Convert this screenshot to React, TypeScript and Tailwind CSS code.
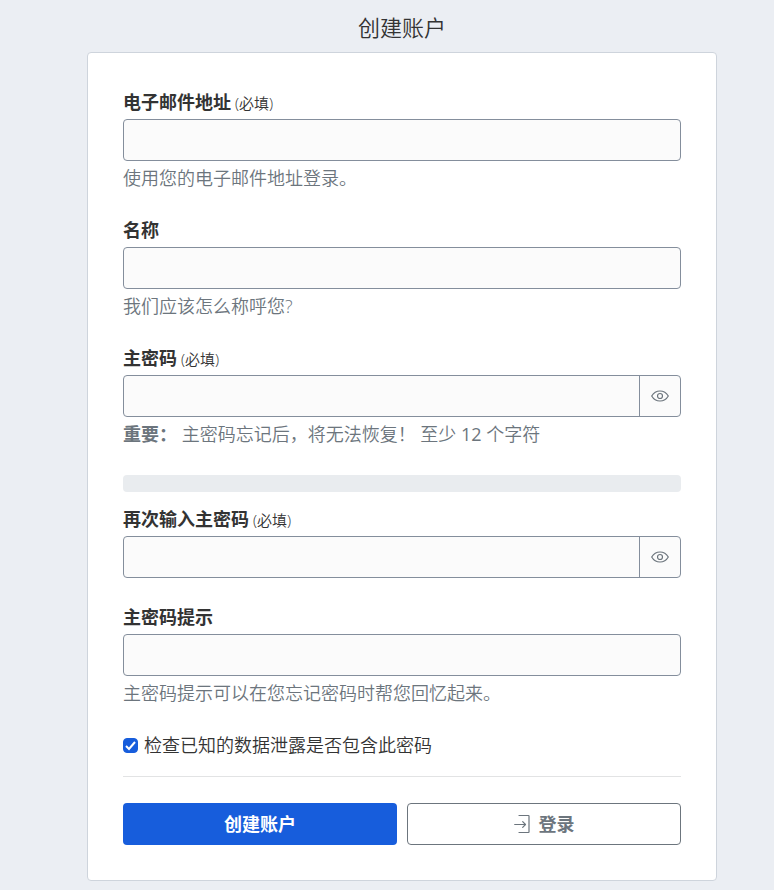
import React, { useState } from "react";

type FieldProps = {
	id: string;
	label: string;
	required?: boolean;
	type?: string;
	hint?: React.ReactNode;
};

const EyeIcon = () => (
	<svg
		width="18"
		height="12"
		viewBox="0 0 18 12"
		fill="none"
		stroke="currentColor"
		strokeWidth="1.2"
		aria-hidden="true"
	>
		<path d="M0.7 6C2.6 2.7 5.5 1 9 1s6.4 1.7 8.3 5C15.4 9.3 12.5 11 9 11S2.6 9.3 0.7 6z" />
		<circle cx="9" cy="6" r="2.5" />
	</svg>
);

const SignInIcon = () => (
	<svg
		width="16"
		height="20"
		viewBox="0 0 16 20"
		fill="none"
		stroke="currentColor"
		strokeWidth="1.2"
		strokeLinecap="round"
		strokeLinejoin="round"
		aria-hidden="true"
	>
		<path d="M5 1.5h9.5q.5 0 .5.5v16q0 .5-.5.5H5" />
		<path d="M.7 10.5h10.8M8.700 7.700l2.800 2.800-2.800 2.800" />
	</svg>
);

const Label = ({ id, label, required }: FieldProps) => (
	<label htmlFor={id} className="mb-1 block">
		<span className="font-bold">{label}</span>
		{required && <span className="text-[15px] leading-none"> (必填)</span>}
	</label>
);

const Hint = ({ children }: { children: React.ReactNode }) => (
	<p className="mt-1 text-[#6c757d]">{children}</p>
);

const TextField = (props: FieldProps) => (
	<div>
		<Label {...props} />
		<input
			id={props.id}
			type={props.type ?? "text"}
			className="block h-[42px] w-full rounded border border-[#848e9c] bg-[#fbfbfb] px-3 outline-none"
		/>
		{props.hint && <Hint>{props.hint}</Hint>}
	</div>
);

const PasswordField = (props: FieldProps) => {
	const [show, setShow] = useState(false);

	return (
		<div>
			<Label {...props} />
			<div className="flex h-[42px] overflow-hidden rounded border border-[#848e9c] bg-[#fbfbfb]">
				<input
					id={props.id}
					type={show ? "text" : "password"}
					className="min-w-0 flex-1 px-3 outline-none"
				/>
				<button
					type="button"
					aria-label="切换可见性"
					onClick={() => setShow(!show)}
					className="flex w-[41px] items-center justify-center border-l border-[#848e9c] text-[#6c757d]"
				>
					<EyeIcon />
				</button>
			</div>
			{props.hint && <Hint>{props.hint}</Hint>}
		</div>
	);
};

const App = () => {
	return (
		<main className="min-h-screen bg-[#ebeef3] pt-[14px] pr-[57px] pb-[9px] pl-[87px] font-['Open_Sans','Noto_Sans_CJK_SC',sans-serif] text-lg leading-[26px] font-[350] text-[#333333]">
			<h1 className="mb-3 text-center text-[22px] font-[350]">创建账户</h1>

			<form
				className="rounded border border-[#ced4dc] bg-white px-[35px] pt-9 pb-[35px]"
				onSubmit={(e) => e.preventDefault()}
			>
				<div className="flex flex-col gap-[26px]">
					<TextField
						id="email"
						type="email"
						label="电子邮件地址"
						required
						hint="使用您的电子邮件地址登录。"
					/>
					<TextField id="name" label="名称" hint="我们应该怎么称呼您?" />
					<PasswordField
						id="password"
						label="主密码"
						required
						hint={
							<>
								<b className="font-bold">重要：</b> 主密码忘记后，将无法恢复！
								{" 至少 "}
								<span className="font-normal">12</span> 个字符
							</>
						}
					/>
				</div>

				{/* password strength */}
				<div className="mt-7 mb-3.5 h-[17px] rounded bg-[#e9ecef]" />

				<div className="flex flex-col gap-[26px]">
					<PasswordField id="confirm" label="再次输入主密码" required />
					<TextField
						id="hint"
						label="主密码提示"
						hint="主密码提示可以在您忘记密码时帮您回忆起来。"
					/>
					<label className="flex items-center gap-1.5">
						<span className="grid size-[15px] place-items-center">
							<input
								type="checkbox"
								defaultChecked
								className="peer col-start-1 row-start-1 size-[15px] appearance-none rounded-[4px] border border-[#848e9c] checked:border-[#175ddc] checked:bg-[#175ddc]"
							/>
							<svg
								viewBox="0 0 15 15"
								className="pointer-events-none invisible col-start-1 row-start-1 size-[15px] peer-checked:visible"
								fill="none"
								stroke="white"
								strokeWidth="2"
								aria-hidden="true"
							>
								<path d="M3 8l3 3 6-7" />
							</svg>
						</span>
						检查已知的数据泄露是否包含此密码
					</label>
				</div>

				<hr className="mt-[18px] mb-[26px] border-[#e2e3e4]" />

				<div className="grid grid-cols-2 gap-2.5 font-bold">
					<button
						type="submit"
						className="h-[42px] rounded bg-[#175ddc] text-white"
					>
						创建账户
					</button>
					<a
						href="#login"
						className="flex h-[42px] items-center justify-center gap-[9px] rounded border border-[#6c757d] text-[#6c757d]"
					>
						<SignInIcon />
						登录
					</a>
				</div>
			</form>
		</main>
	);
};

export default App;
